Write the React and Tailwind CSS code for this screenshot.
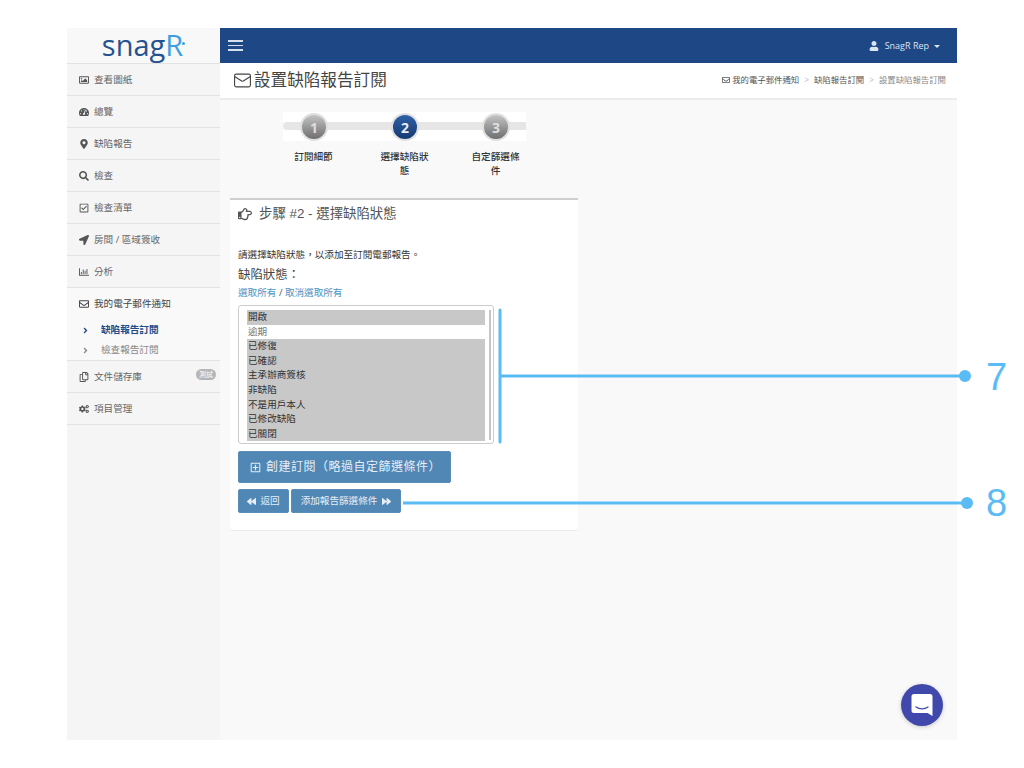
import React from 'react';
import {
  FaRegImage,
  FaTachometerAlt,
  FaMapMarkerAlt,
  FaSearch,
  FaRegCheckSquare,
  FaLocationArrow,
  FaRegChartBar,
  FaRegEnvelope,
  FaRegCopy,
  FaCogs,
  FaUser,
  FaRegHandPointRight,
  FaBackward,
  FaForward,
  FaRegPlusSquare,
  FaAngleRight,
} from 'react-icons/fa';
import { Mail } from 'lucide-react';

const fontStack = { fontFamily: '"Open Sans", "Noto Sans CJK TC", sans-serif' };

const navTop = [
  { icon: FaRegImage, label: '查看圖紙' },
  { icon: FaTachometerAlt, label: '總覽' },
  { icon: FaMapMarkerAlt, label: '缺陷報告' },
  { icon: FaSearch, label: '檢查' },
  { icon: FaRegCheckSquare, label: '檢查清單' },
  { icon: FaLocationArrow, label: '房間 / 區域簽收' },
  { icon: FaRegChartBar, label: '分析' },
];

const statuses = [
  { label: '開啟', selected: true },
  { label: '逾期', selected: false },
  { label: '已修復', selected: true },
  { label: '已確認', selected: true },
  { label: '主承辦商簽核', selected: true },
  { label: '非缺陷', selected: true },
  { label: '不是用戶本人', selected: true },
  { label: '已修改缺陷', selected: true },
  { label: '已關閉', selected: true },
];

const steps = [
  { n: 1, label: '訂閱細節', active: false },
  { n: 2, label: '選擇缺陷狀態', active: true },
  { n: 3, label: '自定篩選條件', active: false },
];

function NavItem({ icon: Icon, label, badge }) {
  return (
    <div className="flex h-8 items-center border-b border-[#e3e3e3] pl-[11px] pt-[1px] text-[#666]">
      <span className="mr-[5px] flex w-[11px] justify-center text-[10px] text-[#555]">
        <Icon />
      </span>
      <span className="text-[9.6px]">{label}</span>
      {badge && (
        <span className="ml-auto mr-[4px] mb-[5px] rounded-full bg-[#b5b5b5] px-[3px] text-[7px] leading-[11px] text-white">
          {badge}
        </span>
      )}
    </div>
  );
}

function Sidebar() {
  return (
    <aside className="w-[153px] shrink-0 bg-[#f5f5f5]">
      <div className="flex h-[36px] items-center justify-center border-b border-[#e3e3e3] bg-[#f8f8f8] pb-[3px]">
        <span className="text-[29px] font-medium leading-none text-[#25538f]">
          snag<span className="font-normal text-[#3f9fdc]">R</span>
        </span>
        <span className="mb-[1px] -ml-[1px] h-[3px] w-[3px] rounded-full bg-[#3f9fdc]" />
      </div>
      {navTop.map((item) => (
        <NavItem key={item.label} icon={item.icon} label={item.label} />
      ))}
      <div className="border-b border-[#e3e3e3] bg-[#f9f9f9]">
        <div className="flex h-8 items-center pl-[11px] text-[#444]">
          <span className="mr-[5px] flex w-[11px] justify-center text-[10px]">
            <FaRegEnvelope />
          </span>
          <span className="text-[9.6px]">我的電子郵件通知</span>
        </div>
        <div className="flex h-[21px] items-center pl-[16px] text-[9.6px] font-bold text-[#1f4a86]">
          <FaAngleRight className="w-[5px] text-[9px]" />
          <span className="ml-[13px]">缺陷報告訂閱</span>
        </div>
        <div className="flex h-[19px] items-center pl-[16px] text-[9.6px] text-[#888]">
          <FaAngleRight className="w-[5px] text-[9px]" />
          <span className="ml-[13px]">檢查報告訂閱</span>
        </div>
      </div>
      <NavItem icon={FaRegCopy} label="文件儲存庫" badge="測試" />
      <NavItem icon={FaCogs} label="項目管理" />
    </aside>
  );
}

function TopBar() {
  return (
    <div className="flex h-[35px] items-center justify-between bg-[#1e4785] pl-2 pr-[17px] text-white">
      <div className="flex w-[15px] flex-col gap-[3px]">
        <span className="h-[1.5px] bg-[#d5dfee]" />
        <span className="h-[1.5px] bg-[#d5dfee]" />
        <span className="h-[1.5px] bg-[#d5dfee]" />
      </div>
      <div className="flex items-center text-[9px] text-[#dbe4f1]">
        <FaUser className="mr-[6px] text-[10px]" />
        <span>SnagR Rep</span>
        <span className="ml-[5px] mt-[1px] h-0 w-0 border-x-[3px] border-t-[3px] border-x-transparent border-t-[#dbe4f1]" />
      </div>
    </div>
  );
}

function PageHeader() {
  return (
    <div className="flex h-[37px] items-center justify-between border-b-2 border-[#ececec] bg-white pl-[13px] pr-[11px]">
      <h1 className="flex items-center text-[16.6px] font-normal text-[#444]">
        <Mail size={19} strokeWidth={1.4} className="mr-[2px]" />
        設置缺陷報告訂閱
      </h1>
      <div className="flex items-center text-[8.4px] text-[#555]">
        <FaRegEnvelope className="mr-[2px] text-[8px]" />
        <span>我的電子郵件通知</span>
        <span className="mx-[5px] text-[#bbb]">&gt;</span>
        <span>缺陷報告訂閱</span>
        <span className="mx-[5px] text-[#bbb]">&gt;</span>
        <span className="text-[#888]">設置缺陷報告訂閱</span>
      </div>
    </div>
  );
}

function Stepper() {
  return (
    <div className="ml-[63px] w-[243px] pt-[12px]">
      <div className="relative h-[29px] bg-white">
        <div className="absolute left-0 right-0 top-[10px] h-[8px] rounded-l-full bg-[#e6e6e6]" />
        <div className="relative flex justify-between pl-[17px] pr-[16px] pt-[1px]">
          {steps.map((s) => (
            <span
              key={s.n}
              className={`flex h-[28px] w-[28px] items-center justify-center rounded-full border-[2px] border-[#e0e0e0] text-[14px] font-bold ${
                s.active
                  ? 'bg-gradient-to-b from-[#2f62a8] to-[#153a72] text-[#e8eef7]'
                  : 'bg-gradient-to-b from-[#c4c4c4] to-[#6f6f6f] text-[#dedede]'
              }`}
            >
              {s.n}
            </span>
          ))}
        </div>
      </div>
      <div className="-ml-[15px] mt-[9px] grid h-[48px] w-[273px] grid-cols-3">
        {steps.map((s) => (
          <div key={s.n} className="flex justify-center">
            <span className="w-[50px] text-center text-[9.6px] font-medium leading-[14px] text-[#333]">
              {s.label}
            </span>
          </div>
        ))}
      </div>
    </div>
  );
}

function StatusSelect() {
  return (
    <div className="mt-[5px] flex h-[139px] w-[256px] rounded-[3px] border border-[#ccc] bg-white pl-[8px] pr-[2px] pt-[4px]">
      <ul className="w-[239px]">
        {statuses.map((s) => (
          <li
            key={s.label}
            className={`h-[14.6px] pl-[1px] text-[9.6px] leading-[14.6px] ${
              s.selected ? 'bg-[#c8c8c8] text-[#333]' : 'bg-white text-[#777]'
            }`}
          >
            {s.label}
          </li>
        ))}
      </ul>
      <div className="ml-[4px] h-[130px] w-[2px] bg-[#c4c4c4]" />
    </div>
  );
}

function StepCard() {
  return (
    <section className="ml-[10px] h-[332px] w-[348px] rounded-b-[3px] border-t-2 border-[#cfcfcf] bg-white px-2 shadow-[0_1px_1px_rgba(0,0,0,0.06)]">
      <h2 className="flex h-[28px] items-center font-['Liberation_Sans','Noto_Sans_CJK_TC',sans-serif] text-[13.4px] font-normal text-[#555]">
        <FaRegHandPointRight className="mr-[7px] text-[14px]" />
        步驟 #2 - 選擇缺陷狀態
      </h2>
      <p className="mt-[20px] text-[9.6px] leading-[14px] text-[#333]">
        請選擇缺陷狀態，以添加至訂閱電郵報告。
      </p>
      <div className="mt-[4px] text-[12.4px] leading-[18px] text-[#444]">缺陷狀態：</div>
      <div className="mt-[2px] text-[9.6px] leading-[14px] text-[#4a94c4]">
        選取所有 <span className="text-[#555]">/</span> 取消選取所有
      </div>
      <StatusSelect />
      <button className="mt-[7px] flex h-[32px] w-[213px] items-center rounded-[2px] border border-[#5a8db8] bg-[#5087b5] pl-[11px] text-[12px] tracking-[0.5px] text-[#e6eef5]">
        <FaRegPlusSquare className="mr-[5px] text-[11px]" />
        創建訂閱（略過自定篩選條件）
      </button>
      <div className="mt-[6px] flex gap-[2px]">
        <button className="flex h-[24px] w-[51px] items-center justify-center rounded-[2px] border border-[#5a8db8] bg-[#5087b5] text-[9.6px] text-[#e6eef5]">
          <FaBackward className="mr-[4px] text-[9px]" />
          返回
        </button>
        <button className="flex h-[24px] w-[110px] items-center justify-center rounded-[2px] border border-[#5a8db8] bg-[#5087b5] text-[9.6px] text-[#e6eef5]">
          添加報告篩選條件
          <FaForward className="ml-[5px] text-[9px]" />
        </button>
      </div>
    </section>
  );
}

function Annotations() {
  return (
    <>
      <svg className="absolute left-0 top-0" width="1024" height="768" fill="none">
        <path d="M500 310V442" stroke="#5bbcf5" strokeWidth="3" strokeLinecap="round" />
        <path d="M500 376H965" stroke="#5bbcf5" strokeWidth="3" />
        <circle cx="965" cy="376" r="6" fill="#5bbcf5" />
        <path d="M403 503H967" stroke="#5bbcf5" strokeWidth="3" />
        <circle cx="967" cy="503" r="6" fill="#5bbcf5" />
      </svg>
      <span className="absolute left-[986px] top-[355px] font-['Liberation_Sans',sans-serif] text-[38px] leading-[44px] text-[#5bbcf5]">
        7
      </span>
      <span className="absolute left-[986px] top-[481px] font-['Liberation_Sans',sans-serif] text-[38px] leading-[44px] text-[#5bbcf5]">
        8
      </span>
      <div className="absolute left-[901px] top-[684px] flex h-[42px] w-[42px] items-center justify-center rounded-full bg-[#4049ab] shadow-[0_1px_4px_rgba(0,0,0,0.2)]">
        <svg width="22" height="24" viewBox="0 0 22 24">
          <path
            d="M3 1h16a2.5 2.5 0 0 1 2.5 2.5V23l-5-3H3A2.5 2.5 0 0 1 .5 17.500V3.500A2.500 2.500 0 0 1 3 1z"
            fill="#fff"
          />
          <path d="M5 14c3.500 2.500 8.500 2.500 12 0" stroke="#4049ab" strokeWidth="1.300" fill="none" strokeLinecap="round" />
        </svg>
      </div>
    </>
  );
}

export default function App() {
  return (
    <div className="relative h-[768px] w-[1024px] overflow-hidden bg-white pl-[67px] pt-[28px]" style={fontStack}>
      <div className="flex h-[712px] w-[890px]">
        <Sidebar />
        <main className="flex-1 bg-[#f9f9f9]">
          <TopBar />
          <PageHeader />
          <Stepper />
          <StepCard />
        </main>
      </div>
      <Annotations />
    </div>
  );
}
